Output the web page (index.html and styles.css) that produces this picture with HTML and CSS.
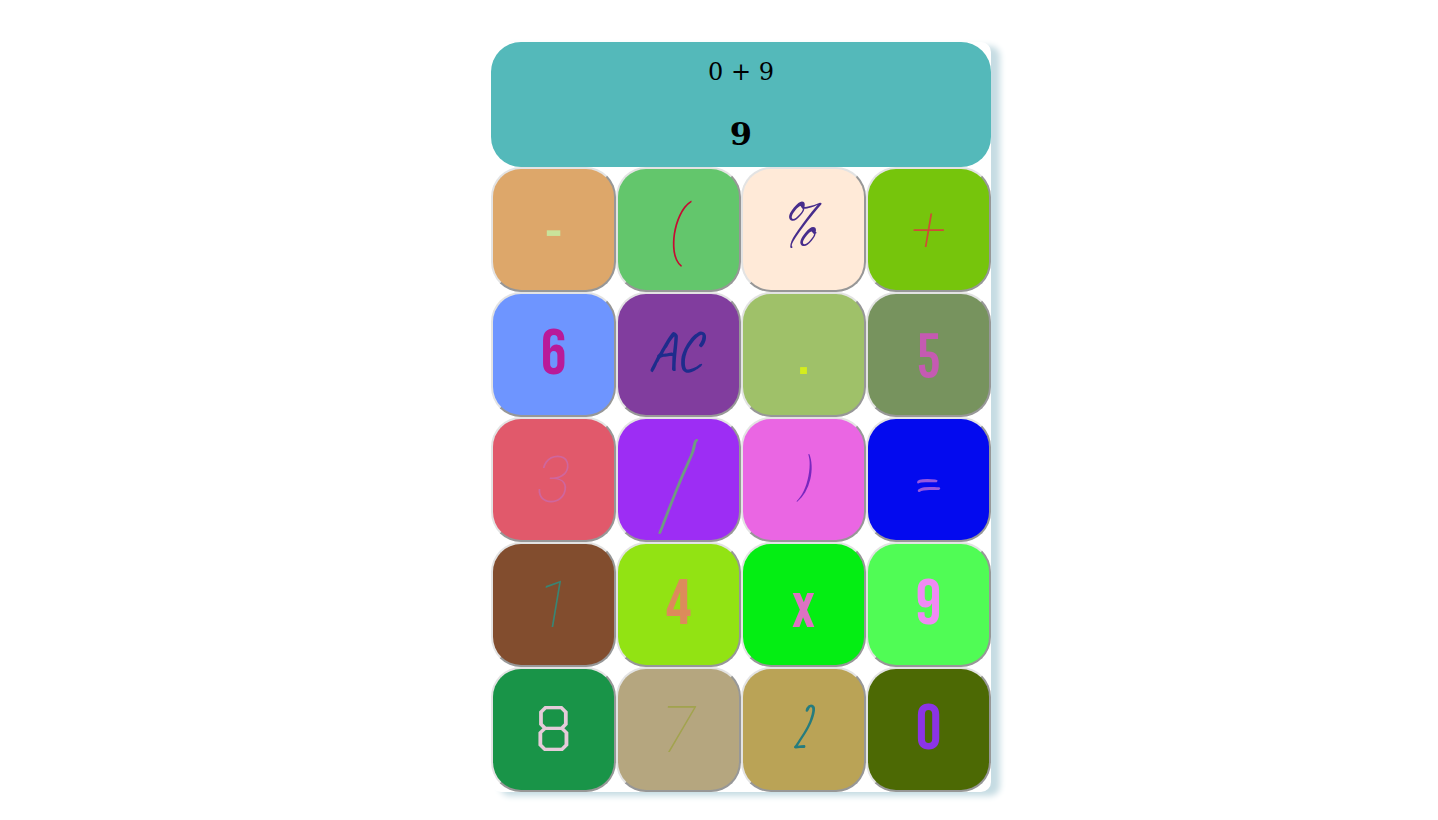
FILE: index.html
```html
<!DOCTYPE html>
<html lang="en">
<head>
<meta charset="utf-8">
<meta name="viewport" content="width=device-width, initial-scale=1">
<title>Calculator</title>
<link rel="stylesheet" href="styles.css">
</head>
<body>
<main class="calculator">
  <section class="display" aria-live="polite">
    <p class="expression">0 + 9</p>
    <h1 class="result">9</h1>
  </section>
  <div class="keys">
    <button type="button" class="key gothic minus">-</button>
    <button type="button" class="key hairline open">(</button>
    <button type="button" class="key script percent">%</button>
    <button type="button" class="key hairline plus">+</button>
    <button type="button" class="key poster six">6</button>
    <button type="button" class="key hand clear">AC</button>
    <button type="button" class="key poster dot">.</button>
    <button type="button" class="key gothic five">5</button>
    <button type="button" class="key hairline three">3</button>
    <button type="button" class="key pen divide">/</button>
    <button type="button" class="key close">)</button>
    <button type="button" class="key pen equals">=</button>
    <button type="button" class="key hairline one">1</button>
    <button type="button" class="key poster four">4</button>
    <button type="button" class="key gothic times">x</button>
    <button type="button" class="key poster nine">9</button>
    <button type="button" class="key outline eight">8</button>
    <button type="button" class="key hairline seven">7</button>
    <button type="button" class="key two">2</button>
    <button type="button" class="key poster zero">0</button>
  </div>
</main>
</body>
</html>
```
FILE: styles.css
```css
* { box-sizing: border-box; }

body {
  margin: 0;
  padding: 42px 0 28px 44px;
  background: #fff;
  font-family: "DejaVu Serif", serif;
}

.calculator {
  width: 100%;
  max-width: 500px;
  margin: 0 auto;
  border-radius: 10px;
  box-shadow: 9px 4px 6px #c6dce3;
  background: #fff;
}

.display {
  display: flex;
  flex-direction: column;
  align-items: center;
  gap: 28px;
  padding: 16px 16px 14px;
  border-radius: 30px;
  background: #54b9ba;
  color: #000;
}

.expression { margin: 0; font-size: 24px; line-height: 29px; }
.result { margin: 0; font-size: 32px; line-height: 38px; }

.keys {
  display: grid;
  grid-template-columns: repeat(4, 1fr);
}

.key {
  display: flex;
  align-items: center;
  justify-content: center;
  aspect-ratio: 1;
  min-width: 0;
  padding: 0;
  border: 2px solid;
  border-color: #e3e3e3 #979797 #979797 #e3e3e3;
  border-radius: 30px;
  font-size: 64px;
  line-height: 72px;
  font-weight: 400;
  cursor: pointer;
}

.poster { font-family: "Bebas Neue", "DejaVu Sans Condensed", sans-serif; }
.gothic { padding-bottom: 2px; font-family: "Pathway Gothic One", "DejaVu Sans Condensed", sans-serif; font-size: 60px; font-weight: 700; }
.hairline { padding-top: 2px; font-family: Roboto, sans-serif; font-weight: 100; font-style: italic; }
.hand { font-family: Caveat, Lato, sans-serif; }
.pen { padding-top: 7px; font-family: "Bad Script", Lato, sans-serif; }
.script { font-family: "Alex Brush", "Liberation Serif", serif; }
.outline { font-family: "Chakra Petch", Roboto, sans-serif; font-weight: 300; }

.minus { background: #dda76a; color: #c9e39a; }
.open { background: #63c66c; color: #c60b32; }
.percent { background: #ffead8; color: #472d8c; font-size: 56px; }
.plus { background: #76c50c; color: #d04b37; }
.six { background: #6e95ff; color: #b91a99; }
.clear { padding: 0 8px 6px 0; background: #813d9e; color: #1e2c8c; font-size: 56px; }
.dot { background: #9fc169; color: #d4ed1d; }
.five { background: #77935e; color: #c55ab2; }
.three { background: #e1596b; color: #cf669d; }
.divide { background: #9d2df4; color: #6f9b83; }
.close { padding-bottom: 2px; background: #ea66e3; color: #7828be; font-family: Tangerine, "Liberation Serif", serif; }
.equals { background: #030aef; color: #9658df; }
.one { background: #824d2e; color: #398574; }
.four { background: #92e313; color: #dc8b5b; }
.times { background: #04ee13; color: #dc72c2; }
.nine { background: #50fc55; color: #f08af3; }
.eight { background: #199448; color: #e5cbd9; }
.seven { background: #b5a67f; color: #a2a34e; }
.two { padding: 0 6px 6px 0; background: #baa356; color: #267c7e; font-family: "Amatic SC", Lato, sans-serif; font-size: 56px; font-weight: 700; font-style: italic; }
.zero { background: #4c6904; color: #8b34e5; }
```
